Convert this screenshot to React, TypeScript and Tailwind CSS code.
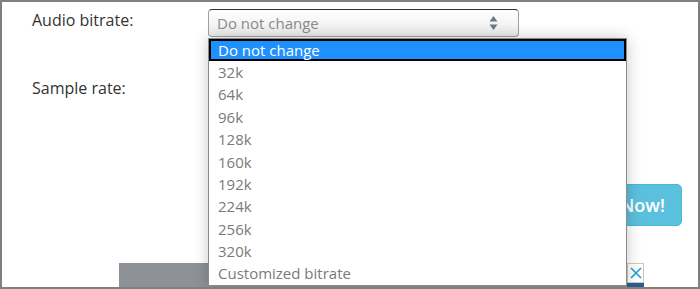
import React from 'react';

const options = ['32k', '64k', '96k', '128k', '160k', '192k', '224k', '256k', '320k', 'Customized bitrate'];

function SelectBox({ value }: { value: string }) {
  return (
    <div className="flex h-[28px] w-[311px] items-center justify-between rounded-[4px] border border-[#a0a0a0] border-t-[#333] bg-gradient-to-b from-white to-[#ececec] pl-[8px] pr-[20px] text-[15px] text-[#8a8a8a]">
      <span className="leading-none">{value}</span>
      <svg width="9" height="16" viewBox="0 0 9 16">
        <path d="M4.5 1 L8.5 6.5 H0.5 Z" fill="#6e7884" />
        <path d="M4.5 15 L8.5 9.5 H0.5 Z" fill="#6e7884" />
      </svg>
    </div>
  );
}

export default function App() {
  return (
    <div
      className="relative h-[289px] w-[700px] overflow-hidden border-2 border-[#808080] bg-white"
      style={{ fontFamily: '"Open Sans", "Noto Sans", sans-serif' }}
    >
      <div className="flex flex-col pl-[30px] pt-[7px]">
        <div className="flex items-start">
          <span className="w-[176px] text-[16px] leading-[22px] text-[#333]">Audio bitrate:</span>
          <SelectBox value="Do not change" />
        </div>
        <div className="mt-[40px] flex items-start">
          <span className="w-[176px] text-[16px] leading-[22px] text-[#333]">Sample rate:</span>
          <SelectBox value="" />
        </div>
        <div className="mt-[79px] flex justify-end pr-[16px]">
          <button className="h-[42px] rounded-[5px] border border-[#46b8da] bg-[#5bc0de] px-[16px] text-[18px] font-semibold text-white">
            Convert Now!
          </button>
        </div>
      </div>

      <div className="absolute left-[117px] top-[261px] flex h-[26px]">
        <div className="w-[508px] bg-[#8e9196]" />
        <div className="flex w-[17px] flex-col">
          <div className="flex h-[20px] items-center justify-center border border-[#d8c4b4] bg-white">
            <svg width="12" height="12" viewBox="0 0 12 12">
              <path d="M1 1 L11 11 M11 1 L1 11" stroke="#1e9fd6" strokeWidth="1.6" />
            </svg>
          </div>
          <div className="flex-1 bg-[#2a5d94]" />
        </div>
      </div>

      <div className="absolute left-[206px] top-[36px] w-[419px] border border-[#8a8a8a] bg-white shadow-[0_0_14px_rgba(0,0,0,0.22)]">
        <div className="flex h-[22px] items-center border-2 border-black bg-[#1e90ff] pl-[7px] text-[15px] text-white">
          Do not change
        </div>
        {options.map((o) => (
          <div key={o} className="flex h-[22.4px] items-center pl-[9px] text-[15px] text-[#7a7a7a]">
            {o}
          </div>
        ))}
      </div>
    </div>
  );
}
